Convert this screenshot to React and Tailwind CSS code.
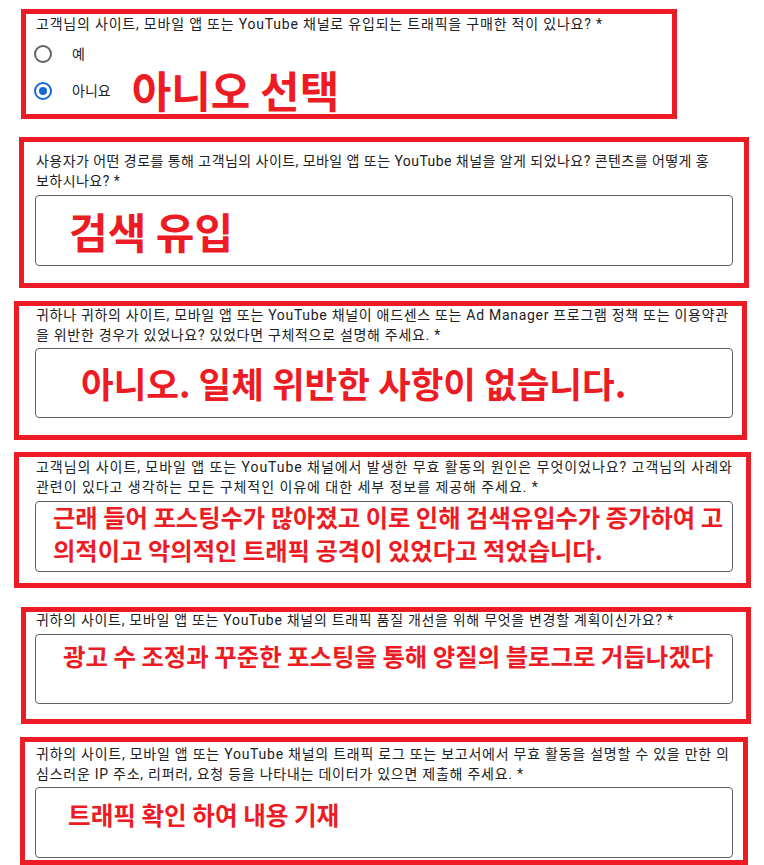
import React from 'react';

const questionFont = { fontFamily: 'Roboto, "Noto Sans CJK KR", sans-serif' };
const markFont = { fontFamily: '"Noto Sans CJK KR", "Noto Sans", sans-serif' };

const Question = ({ lines, className }) => (
    <div className={`text-[14px] leading-[20px] text-[#202124] whitespace-nowrap ml-[1px] ${className}`} style={questionFont}>
        {lines.map((line, idx) => <div key={idx}>{line}</div>)}
    </div>
);

const Mark = ({ className, children }) => (
    <div className={`font-bold text-[#ed1c24] whitespace-nowrap ${className}`} style={markFont}>{children}</div>
);

const Radio = ({ checked }) => (
    checked
        ? <span className="w-[18px] h-[18px] rounded-full border-2 border-[#1967d2] flex items-center justify-center">
            <span className="block w-[8px] h-[8px] rounded-full bg-[#1967d2]"></span>
        </span>
        : <span className="block w-[18px] h-[18px] rounded-full border-2 border-[#5f6368]"></span>
);

const AnswerBox = ({ className, children }) => (
    <div className={`w-[698px] border border-[#5f6368] rounded-[4px] bg-white ${className}`}>
        {children}
    </div>
);

export default function App() {
    return (
        <div className="w-[764px] h-[865px] bg-white overflow-hidden flex flex-col">
            {/* 1. radio question */}
            <div className="ml-[21px] mt-[9px] w-[656px] h-[110px] shrink-0 border-[5px] border-[#ed1c24] pl-[9px]">
                <Question className="tracking-[0.8px]" lines={['고객님의 사이트, 모바일 앱 또는 YouTube 채널로 유입되는 트래픽을 구매한 적이 있나요? *']} />
                <div className="mt-[6px] h-[28px] flex items-center">
                    <span className="ml-[-1px]"><Radio /></span>
                    <span className="ml-[20px] text-[14px] text-[#202124]" style={questionFont}>예</span>
                </div>
                <div className="mt-[9px] h-[28px] flex items-center">
                    <span className="ml-[-1px]"><Radio checked /></span>
                    <span className="ml-[20px] text-[14px] text-[#202124]" style={questionFont}>아니요</span>
                    <Mark className="ml-[21px] text-[43px] leading-none mb-[4px]">아니오 선택</Mark>
                </div>
            </div>

            {/* 2 */}
            <div className="ml-[19px] mt-[18px] w-[730px] h-[151px] shrink-0 border-[5px] border-[#ed1c24] pl-[11px] pt-[9px]">
                <Question className="tracking-[0.45px]" lines={['사용자가 어떤 경로를 통해 고객님의 사이트, 모바일 앱 또는 YouTube 채널을 알게 되었나요? 콘텐츠를 어떻게 홍', '보하시나요? *']} />
                <AnswerBox className="mt-[4px] h-[71px] pt-[14px] pl-[33px]">
                    <Mark className="text-[42px] leading-none">검색 유입</Mark>
                </AnswerBox>
            </div>

            {/* 3 */}
            <div className="ml-[14px] mt-[13px] w-[733px] h-[139px] shrink-0 border-[5px] border-[#ed1c24] pl-[16px]">
                <Question className="-mt-[1px] tracking-[0.7px]" lines={['귀하나 귀하의 사이트, 모바일 앱 또는 YouTube 채널이 애드센스 또는 Ad Manager 프로그램 정책 또는 이용약관', '을 위반한 경우가 있었나요? 있었다면 구체적으로 설명해 주세요. *']} />
                <AnswerBox className="mt-[3px] h-[70px] pt-[16px] pl-[45px]">
                    <Mark className="text-[35.5px] leading-none">아니오. 일체 위반한 사항이 없습니다.</Mark>
                </AnswerBox>
            </div>

            {/* 4 */}
            <div className="ml-[14px] mt-[12px] w-[737px] h-[136px] shrink-0 border-[5px] border-[#ed1c24] pl-[16px]">
                <Question className="tracking-[0.95px]" lines={['고객님의 사이트, 모바일 앱 또는 YouTube 채널에서 발생한 무효 활동의 원인은 무엇이었나요? 고객님의 사례와', '관련이 있다고 생각하는 모든 구체적인 이유에 대한 세부 정보를 제공해 주세요. *']} />
                <AnswerBox className="mt-[4px] h-[71px] pl-[17px]">
                    <Mark className="text-[24.3px] leading-[33px] -mt-[2px]">
                        <div>근래 들어 포스팅수가 많아졌고 이로 인해 검색유입수가 증가하여 고</div>
                        <div>의적이고 악의적인 트래픽 공격이 있었다고 적었습니다.</div>
                    </Mark>
                </AnswerBox>
            </div>

            {/* 5 */}
            <div className="ml-[21px] mt-[19px] w-[730px] h-[117px] shrink-0 border-[5px] border-[#ed1c24] pl-[9px]">
                <Question className="-mt-[2px] tracking-[0.7px]" lines={['귀하의 사이트, 모바일 앱 또는 YouTube 채널의 트래픽 품질 개선을 위해 무엇을 변경할 계획이신가요? *']} />
                <AnswerBox className="mt-[4px] h-[70px] pt-[9px] pl-[27px]">
                    <Mark className="text-[24.4px] leading-none">광고 수 조정과 꾸준한 포스팅을 통해 양질의 블로그로 거듭나겠다</Mark>
                </AnswerBox>
            </div>

            {/* 6 */}
            <div className="ml-[20px] mt-[13px] w-[728px] h-[128px] shrink-0 border-[5px] border-[#ed1c24] pl-[10px] pt-[2px]">
                <Question className="tracking-[0.75px]" lines={['귀하의 사이트, 모바일 앱 또는 YouTube 채널의 트래픽 로그 또는 보고서에서 무효 활동을 설명할 수 있을 만한 의', '심스러운 IP 주소, 리퍼러, 요청 등을 나타내는 데이터가 있으면 제출해 주세요. *']} />
                <AnswerBox className="mt-[3px] h-[71px] pt-[14px] pl-[32px]">
                    <Mark className="text-[24.6px] leading-none">트래픽 확인 하여 내용 기재</Mark>
                </AnswerBox>
            </div>
        </div>
    );
}
